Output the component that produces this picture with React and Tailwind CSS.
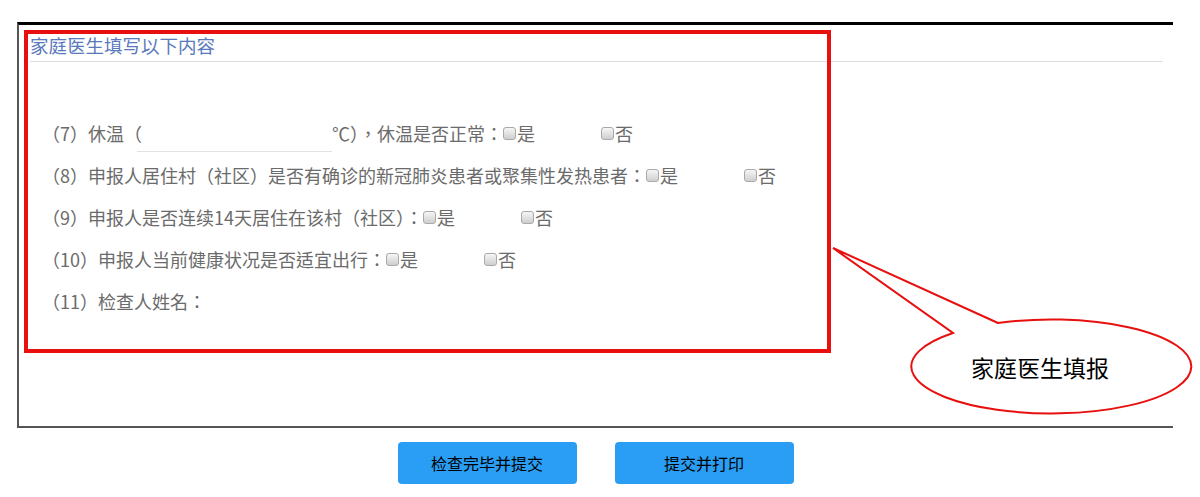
import React from "react";

const font = { fontFamily: '"Noto Sans CJK TC", "Noto Sans CJK SC", "Liberation Sans", sans-serif' };

const Box = () => (
  <span className="inline-block w-[13px] h-[13px] rounded-[3px] border border-[#a9a9a9] bg-gradient-to-b from-[#f6f6f6] to-[#cfcfcf] align-middle" />
);

const YesNo = () => (
  <span className="flex items-center">
    <Box />
    <span className="ml-[1px] mr-[66px]">是</span>
    <Box />
    <span className="ml-[1px]">否</span>
  </span>
);

const Row = ({ children }) => (
  <div className="h-[42px] flex items-center pl-[12px] text-[18px] text-[#6b6b6b] whitespace-nowrap">
    {children}
  </div>
);

export default function App() {
  return (
    <div className="relative w-[1200px] h-[497px] bg-white overflow-hidden" style={font}>
      {/* form frame */}
      <div className="ml-[17px] mt-[22px] w-[1156px] h-[406px] border-t-[3px] border-t-black border-l-2 border-l-[#555] border-b-2 border-b-[#555] pl-[11px] pr-[10px]">
        <div className="pt-[8px] pb-[4px] border-b border-[#dedede] text-[18.5px] leading-[24px] text-[#5a79bd]">
          家庭医生填写以下内容
        </div>

        <div className="mt-[50px]">
          <Row>
            <span>（7）休温（</span>
            <span className="ml-[-5px] w-[195px] h-[38px] border-b border-[#e2e2e2] self-start mt-[2px]" />
            <span>℃），休温是否正常：</span>
            <YesNo />
          </Row>
          <Row>
            <span>（8）申报人居住村（社区）是否有确诊的新冠肺炎患者或聚集性发热患者：</span>
            <YesNo />
          </Row>
          <Row>
            <span>（9）申报人是否连续14天居住在该村（社区）：</span>
            <YesNo />
          </Row>
          <Row>
            <span>（10）申报人当前健康状况是否适宜出行：</span>
            <YesNo />
          </Row>
          <Row>
            <span>（11）检查人姓名：</span>
          </Row>
        </div>
      </div>

      {/* buttons */}
      <div className="flex justify-center gap-[38px] mt-[14px]">
        <button className="ml-[-9px] w-[179px] h-[42px] rounded-[4px] bg-[#2a9df4] text-[16px] text-black">
          检查完毕并提交
        </button>
        <button className="w-[179px] h-[42px] rounded-[4px] bg-[#2a9df4] text-[16px] text-black">
          提交并打印
        </button>
      </div>

      {/* annotation: red box */}
      <div className="absolute left-[24px] top-[30px] w-[807px] h-[323px] border-4 border-[#e8100f] pointer-events-none" />

      {/* annotation: callout */}
      <svg className="absolute left-0 top-0 pointer-events-none" width="1200" height="497">
        <path
          d="M 998 323 L 833 248 L 953 333 A 140 47 0 1 0 998 323 Z"
          fill="white"
          stroke="#e8100f"
          strokeWidth="2"
          strokeLinejoin="miter"
        />
      </svg>
      <div className="absolute left-[900px] top-[320px] w-[280px] h-[95px] flex items-center justify-center text-[23px] text-black pointer-events-none">
        家庭医生填报
      </div>
    </div>
  );
}
